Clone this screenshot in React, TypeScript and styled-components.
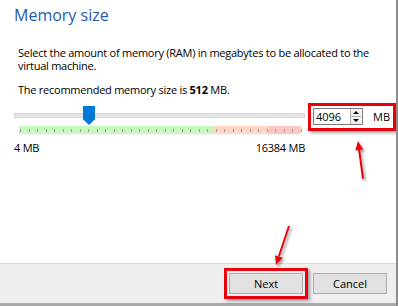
import React from 'react';
import styled, { createGlobalStyle } from 'styled-components';

const Global = createGlobalStyle`
  html, body {
    margin: 0;
    padding: 0;
    background: #fff;
  }
  body {
    font-family: "Open Sans", "Noto Sans", "DejaVu Sans", sans-serif;
    font-size: 11px;
    color: #000;
  }
`;

const Window = styled.div`
  position: relative;
  width: 398px;
  height: 306px;
  overflow: hidden;
  background: #fff;
  display: flex;
  flex-direction: column;
  border-right: 2px solid #8c8c8c;
  box-sizing: border-box;
`;

const Body = styled.div`
  flex: 1;
  padding: 3px 0 0 14px;
`;

const Title = styled.div`
  font-size: 16px;
  color: #2559ad;
  line-height: 24px;
  margin-bottom: 19px;
`;

const Text = styled.p`
  margin: 0 0 0 4px;
  line-height: 13px;
  width: 370px;
  letter-spacing: -0.25px;
  & + & {
    margin-top: 11px;
  }
  b {
    font-weight: 700;
  }
`;

const SliderRow = styled.div`
  display: flex;
  align-items: flex-start;
  margin-top: 9px;
`;

const Slider = styled.div`
  width: 291px;
  display: flex;
  flex-direction: column;
`;

const TrackArea = styled.div`
  position: relative;
  height: 21px;
  display: flex;
  align-items: center;
`;

const Track = styled.div`
  width: 100%;
  height: 3px;
  background: #e6e6e6;
  border: 1px solid #d6d6d6;
`;

const Handle = styled.div`
  position: absolute;
  top: 1px;
  width: 12px;
  height: 19px;
  background: #0078d7;
  clip-path: polygon(0 0, 100% 0, 100% 70%, 50% 100%, 0 70%);
`;

const Scale = styled.div`
  display: flex;
  height: 8px;
  margin: 0 2px 0 5px;
  position: relative;
`;

const Zone = styled.div<{ $w: number; $c: string }>`
  width: ${(p) => p.$w}px;
  background: ${(p) => p.$c};
`;

const Ticks = styled.div`
  position: absolute;
  inset: 0;
  display: flex;
  justify-content: space-between;
  align-items: center;
  padding: 0 1px;
`;

const Tick = styled.span`
  width: 1px;
  height: 3px;
  background: #9e948a;
`;

const Labels = styled.div`
  display: flex;
  justify-content: space-between;
  margin-top: 7px;
  line-height: 14px;
  letter-spacing: -0.25px;
`;

const Highlight = styled.div`
  border: 3px solid #e8000b;
  box-shadow: 2px 2px 3px rgba(0, 0, 0, 0.35);
`;

const SpinHighlight = styled(Highlight)`
  margin: -2px 0 0 3px;
  padding: 2px 3px 3px 2px;
  display: flex;
  align-items: center;
  gap: 10px;
`;

const SpinBox = styled.div`
  width: 50px;
  height: 17px;
  border: 1px solid #7a7a7a;
  display: flex;
  align-items: center;
  justify-content: space-between;
  padding-left: 2px;
  box-sizing: border-box;
  background: #fff;
`;

const SpinValue = styled.span`
  line-height: 15px;
`;

const SpinButtons = styled.div`
  width: 10px;
  height: 15px;
  display: flex;
  flex-direction: column;
  border-left: 1px solid #adadad;
  background: #f0f0f0;
  margin-right: 1px;
`;

const SpinArrow = styled.div<{ $down?: boolean }>`
  flex: 1;
  display: flex;
  align-items: center;
  justify-content: center;
  & + & {
    border-top: 1px solid #adadad;
  }
  &::after {
    content: '';
    border-left: 3px solid transparent;
    border-right: 3px solid transparent;
    ${(p) => (p.$down ? 'border-top: 3px solid #000;' : 'border-bottom: 3px solid #000;')}
  }
`;

const Unit = styled.span`
  line-height: 15px;
`;

const Footer = styled.div`
  height: 39px;
  background: #efefef;
  border-top: 1px solid #dcdcdc;
  border-bottom: 3px solid #a9a9a9;
  display: flex;
  justify-content: flex-end;
  align-items: center;
  gap: 5px;
  padding-right: 9px;
`;

const ButtonHighlight = styled(Highlight)`
  padding: 2px;
`;

const Button = styled.button`
  width: 74px;
  height: 21px;
  background: #e1e1e1;
  border: 1px solid #adadad;
  font: inherit;
  color: #000;
  padding: 0;
`;

const Annotations = styled.svg`
  position: absolute;
  left: 0;
  top: 0;
  pointer-events: none;
`;

const zones = [
  { w: 194, c: '#c6f8c0' },
  { w: 55, c: '#ffd7c6' },
  { w: 33, c: '#ffc6c6' },
];

function Arrow({ x1, y1, x2, y2 }: { x1: number; y1: number; x2: number; y2: number }) {
  const a = Math.atan2(y2 - y1, x2 - x1);
  const l = 9;
  const w = 4;
  const bx = x2 - l * Math.cos(a);
  const by = y2 - l * Math.sin(a);
  const px = -Math.sin(a) * w;
  const py = Math.cos(a) * w;
  return (
    <g filter="url(#sh)">
      <line x1={x1} y1={y1} x2={bx} y2={by} stroke="#e8000b" strokeWidth={2} />
      <polygon points={`${x2},${y2} ${bx + px},${by + py} ${bx - px},${by - py}`} fill="#e8000b" />
    </g>
  );
}

export default function App() {
  const ticks = Array.from({ length: 34 });
  return (
    <>
      <Global />
      <Window>
        <Body>
          <Title>Memory size</Title>
          <Text>Select the amount of memory (RAM) in megabytes to be allocated to the virtual machine.</Text>
          <Text>
            The recommended memory size is <b>512</b> MB.
          </Text>
          <SliderRow>
            <Slider>
              <TrackArea>
                <Track />
                <Handle style={{ left: 69 }} />
              </TrackArea>
              <Scale>
                {zones.map((z) => (
                  <Zone key={z.c} $w={z.w} $c={z.c} />
                ))}
                <Ticks>
                  {ticks.map((_, i) => (
                    <Tick key={i} />
                  ))}
                </Ticks>
              </Scale>
              <Labels>
                <span>4 MB</span>
                <span>16384 MB</span>
              </Labels>
            </Slider>
            <SpinHighlight>
              <SpinBox>
                <SpinValue>4096</SpinValue>
                <SpinButtons>
                  <SpinArrow />
                  <SpinArrow $down />
                </SpinButtons>
              </SpinBox>
              <Unit>MB</Unit>
            </SpinHighlight>
          </SliderRow>
        </Body>
        <Footer>
          <ButtonHighlight>
            <Button>Next</Button>
          </ButtonHighlight>
          <Button>Cancel</Button>
        </Footer>
        <Annotations width={398} height={306}>
          <defs>
            <filter id="sh" x="-50%" y="-50%" width="200%" height="200%">
              <feDropShadow dx="2" dy="2" stdDeviation="1.2" floodColor="#000" floodOpacity="0.35" />
            </filter>
          </defs>
          <Arrow x1={363} y1={179} x2={358} y2={141} />
          <Arrow x1={289} y1={226} x2={276} y2={265} />
        </Annotations>
      </Window>
    </>
  );
}
